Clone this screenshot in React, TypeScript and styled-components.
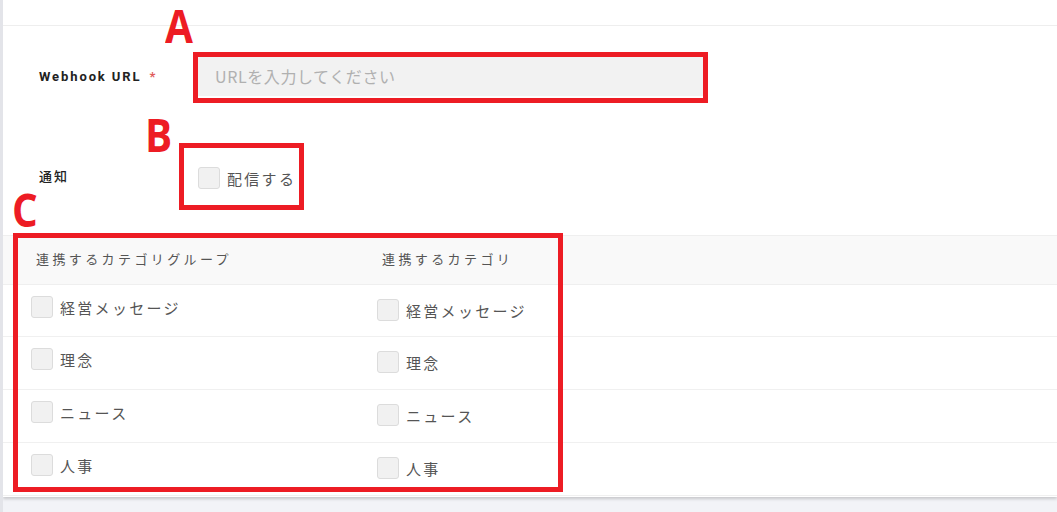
import React from "react";
import styled, { createGlobalStyle } from "styled-components";

const GlobalStyle = createGlobalStyle`
  html, body { margin: 0; padding: 0; background: #f2f3f7; }
  body { font-family: "Noto Sans CJK JP", "Noto Sans", sans-serif; }
  * { box-sizing: border-box; }
`;

const Page = styled.div`
  position: relative;
  width: 1057px;
  height: 512px;
  overflow: hidden;
  border-left: 3px solid #e3e4e9;
  background: #f2f3f7;
`;

const Card = styled.div`
  background: #ffffff;
  height: 497px;
  box-shadow: 0 2px 3px rgba(0, 0, 0, 0.18);
  display: flex;
  flex-direction: column;
`;

const TopBar = styled.div`
  height: 26px;
  border-bottom: 1px solid #eeeeee;
  flex-shrink: 0;
`;

const FormRow = styled.div<{ $top: number }>`
  display: grid;
  grid-template-columns: 159px 1fr;
  align-items: center;
  padding-left: 36px;
  margin-top: ${(p) => p.$top}px;
`;

const Label = styled.div`
  font-family: Roboto, "Noto Sans CJK JP", sans-serif;
  font-size: 13px;
  font-weight: 700;
  letter-spacing: 1.9px;
  color: #222;
`;

const JpLabel = styled.div`
  font-size: 13px;
  font-weight: 500;
  letter-spacing: 2px;
  color: #222;
  margin-top: -5px;
`;

const Required = styled.span`
  color: #e05b5b;
  margin-left: 8px;
`;

const UrlInput = styled.input`
  width: 505px;
  height: 40px;
  border: none;
  outline: none;
  background: #f2f2f2;
  padding: 0 0 0 17px;
  font-family: "Noto Sans CJK JP", sans-serif;
  font-size: 16px;
  letter-spacing: 0.6px;
  color: #333;
  &::placeholder { color: #b0b0b0; }
`;

const CheckLabel = styled.label`
  display: flex;
  align-items: center;
  gap: 7px;
`;

const Box = styled.span`
  display: inline-block;
  width: 22px;
  height: 22px;
  flex-shrink: 0;
  background: #f1f1f1;
  border: 1px solid #dcdcdc;
  border-radius: 3px;
`;

const CheckText = styled.span<{ $size?: number }>`
  font-size: ${(p) => p.$size ?? 15}px;
  letter-spacing: 2.3px;
  color: #555;
  line-height: 1;
`;

const Table = styled.div`
  margin-top: 46px;
  border-top: 1px solid #efefef;
`;

const Row = styled.div<{ $head?: boolean; $h: number }>`
  display: grid;
  grid-template-columns: 346px 220px 1fr;
  height: ${(p) => p.$h}px;
  background: ${(p) => (p.$head ? "#f9f9f9" : "#ffffff")};
  border-bottom: ${(p) => (p.$head ? "1px solid #efefef" : "1px solid #f0f0f0")};
`;

const HeadCell = styled.div`
  display: flex;
  align-items: center;
  padding-left: 33px;
  padding-bottom: 4px;
  font-size: 13px;
  letter-spacing: 3.4px;
  color: #555;
`;

const Cell = styled.div<{ $pt: number }>`
  padding-left: 28px;
  padding-top: ${(p) => p.$pt}px;
`;

const Frame = styled.div<{ $x: number; $y: number; $w: number; $h: number }>`
  position: absolute;
  left: ${(p) => p.$x}px;
  top: ${(p) => p.$y}px;
  width: ${(p) => p.$w}px;
  height: ${(p) => p.$h}px;
  border: 5px solid #ed1c24;
  pointer-events: none;
`;

const Mark = styled.div<{ $x: number; $y: number }>`
  position: absolute;
  left: ${(p) => p.$x}px;
  top: ${(p) => p.$y}px;
  font-family: "Open Sans", "Liberation Sans", sans-serif;
  font-weight: 700;
  font-size: 46px;
  line-height: 1.1;
  color: #ed1c24;
  transform: scaleX(0.88);
  transform-origin: left top;
`;

const items = ["経営メッセージ", "理念", "ニュース", "人事"];
const heights = [52, 53, 53, 53];

export default function App() {
  return (
    <>
      <GlobalStyle />
      <Page>
        <Card>
          <TopBar />
          <FormRow $top={30}>
            <Label>
              Webhook URL<Required>*</Required>
            </Label>
            <UrlInput placeholder="URLを入力してください" />
          </FormRow>
          <FormRow $top={71}>
            <JpLabel>通知</JpLabel>
            <CheckLabel>
              <Box />
              <CheckText>配信する</CheckText>
            </CheckLabel>
          </FormRow>
          <Table>
            <Row $head $h={49}>
              <HeadCell>連携するカテゴリグループ</HeadCell>
              <HeadCell>連携するカテゴリ</HeadCell>
              <div />
            </Row>
            {items.map((it, i) => (
              <Row key={it} $h={heights[i]}>
                <Cell $pt={11}>
                  <CheckLabel>
                    <Box />
                    <CheckText>{it}</CheckText>
                  </CheckLabel>
                </Cell>
                <Cell $pt={14}>
                  <CheckLabel>
                    <Box />
                    <CheckText>{it}</CheckText>
                  </CheckLabel>
                </Cell>
                <div />
              </Row>
            ))}
          </Table>
        </Card>
        <Mark $x={162} $y={0}>A</Mark>
        <Mark $x={142} $y={109}>B</Mark>
        <Mark $x={9} $y={184}>C</Mark>
        <Frame $x={190} $y={52} $w={515} $h={51} />
        <Frame $x={176} $y={143} $w={125} $h={67} />
        <Frame $x={10} $y={233} $w={550} $h={259} />
      </Page>
    </>
  );
}
